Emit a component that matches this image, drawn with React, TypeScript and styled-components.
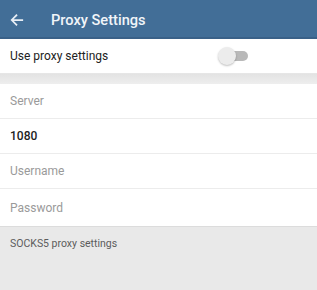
import React, {useState} from 'react';
import styled, {createGlobalStyle} from 'styled-components';

const GlobalStyle = createGlobalStyle`
    html, body {
        margin: 0;
        padding: 0;
        background: #e9e9e9;
        font-family: Roboto, "Liberation Sans", sans-serif;
    }
`;

const Page = styled.div`
    width: 317px;
    height: 290px;
    display: flex;
    flex-direction: column;
    background: #e9e9e9;
    overflow: hidden;
`;

const Toolbar = styled.header`
    height: 39px;
    flex-shrink: 0;
    display: flex;
    align-items: center;
    background: #426e97;
    box-shadow: inset 0 -2px 0 #3a6188;
    color: #fff;
`;

const BackButton = styled.button`
    width: 38px;
    height: 37px;
    padding: 0 0 0 10px;
    border: 0;
    background: none;
    display: flex;
    align-items: center;
    color: #e8eef5;
`;

const Title = styled.h1`
    margin: 0 0 0 13px;
    font-size: 14.6px;
    font-weight: 500;
    color: #f1f5f9;
`;

const SwitchRow = styled.label`
    height: 34px;
    display: flex;
    align-items: center;
    justify-content: space-between;
    padding: 0 69px 0 10px;
    background: #fff;
    border-bottom: 1px solid #e6e6e6;
    font-size: 12px;
    color: #222;
`;

const Track = styled.span<{on: boolean}>`
    position: relative;
    width: 26px;
    height: 10px;
    border-radius: 5px;
    background: ${p => (p.on ? '#8fb1d3' : '#b9b9b9')};
`;

const Thumb = styled.span<{on: boolean}>`
    position: absolute;
    top: -4px;
    left: ${p => (p.on ? '10px' : '-4px')};
    width: 18px;
    height: 18px;
    border-radius: 50%;
    background: ${p => (p.on ? '#426e97' : '#ececec')};
    box-shadow: 0 1px 2px rgba(0, 0, 0, 0.25);
`;

const Gap = styled.div`
    height: 10px;
    background: linear-gradient(#e3e3e3, #eeeeee);
`;

const Fields = styled.div`
    display: flex;
    flex-direction: column;
    background: #fff;
`;

const Field = styled.input`
    height: 34px;
    padding: 0 10px;
    border: 0;
    border-bottom: 1px solid #ececec;
    font-family: inherit;
    font-size: 12px;
    font-weight: 500;
    color: #222;
    outline: none;
    &:last-child {
        border-bottom: 0;
        height: 37px;
    }
    &::placeholder {
        color: #9a9a9a;
        font-weight: 400;
    }
`;

const Note = styled.p`
    margin: 0;
    padding: 10px 10px 0;
    font-size: 10.5px;
    color: #5c5c5c;
    border-top: 1px solid #dcdcdc;
`;

export default function App() {
    const [enabled, setEnabled] = useState(false);

    return (
        <Page>
            <GlobalStyle />
            <Toolbar>
                <BackButton aria-label="Back">
                    <svg width="14" height="14" viewBox="0 0 24 24" fill="none" stroke="currentColor" strokeWidth="3" strokeLinecap="square">
                        <path d="M21 12H4M11 4l-8 8 8 8" />
                    </svg>
                </BackButton>
                <Title>Proxy Settings</Title>
            </Toolbar>
            <SwitchRow onClick={() => setEnabled(!enabled)}>
                Use proxy settings
                <Track on={enabled}>
                    <Thumb on={enabled} />
                </Track>
            </SwitchRow>
            <Gap />
            <Fields>
                <Field placeholder="Server" />
                <Field defaultValue="1080" />
                <Field placeholder="Username" />
                <Field placeholder="Password" type="password" />
            </Fields>
            <Note>SOCKS5 proxy settings</Note>
        </Page>
    );
}
